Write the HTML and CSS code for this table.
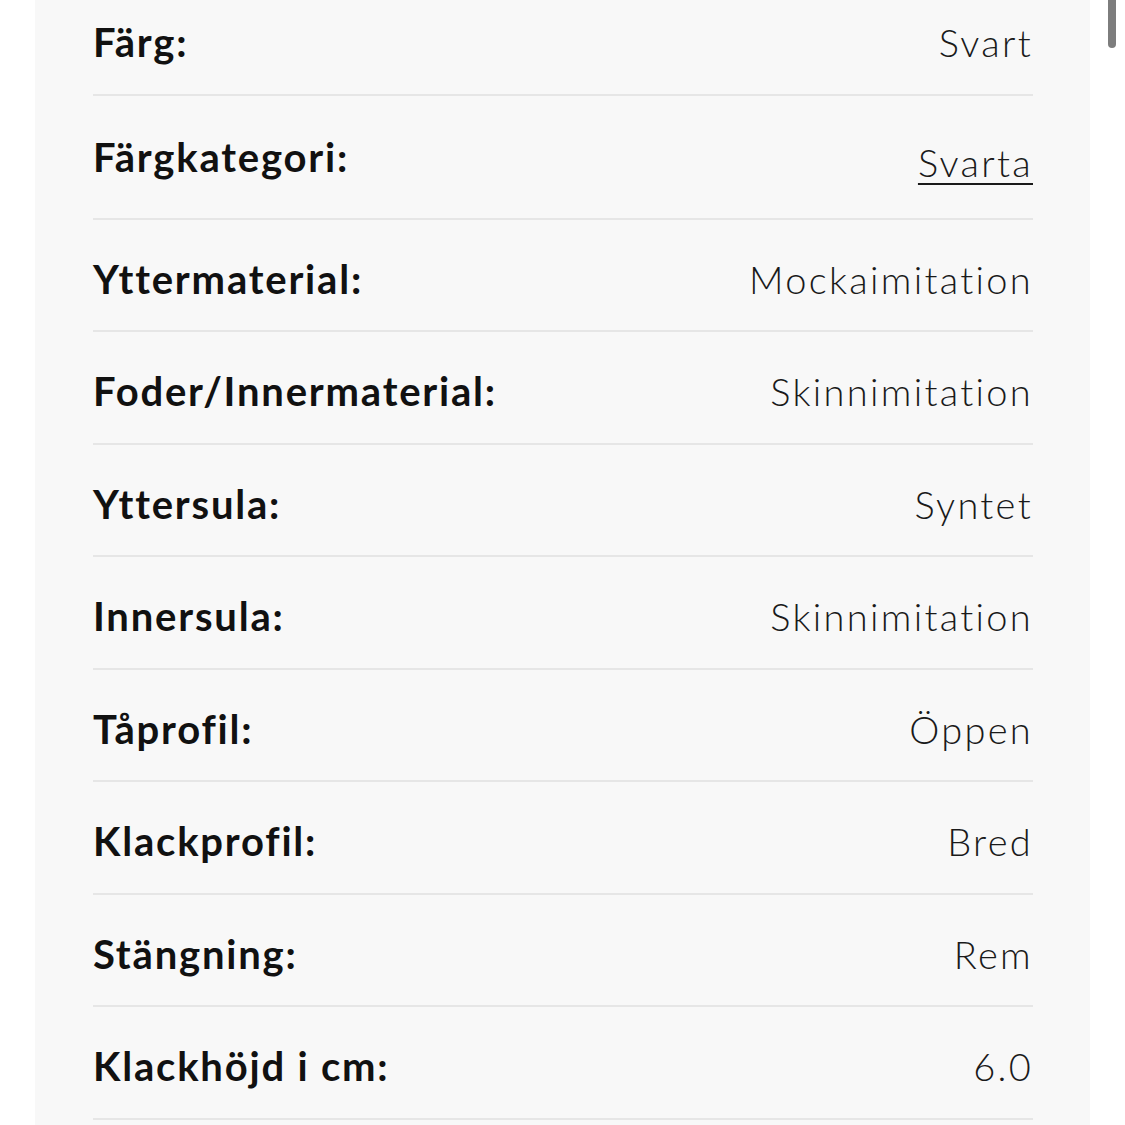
FILE: index.html
```html
<!DOCTYPE html>
<html lang="sv">
<head>
<meta charset="utf-8">
<title>Produktdetaljer</title>
<link rel="stylesheet" href="styles.css">
</head>
<body>
<div class="page">
  <section class="panel">
    <dl class="specs">
      <div class="row first"><dt>Färg:</dt><dd>Svart</dd></div>
      <div class="row linkrow"><dt>Färgkategori:</dt><dd><a href="#">Svarta</a></dd></div>
      <div class="row"><dt>Yttermaterial:</dt><dd>Mockaimitation</dd></div>
      <div class="row"><dt>Foder/Innermaterial:</dt><dd>Skinnimitation</dd></div>
      <div class="row"><dt>Yttersula:</dt><dd>Syntet</dd></div>
      <div class="row"><dt>Innersula:</dt><dd>Skinnimitation</dd></div>
      <div class="row"><dt>Tåprofil:</dt><dd>Öppen</dd></div>
      <div class="row"><dt>Klackprofil:</dt><dd>Bred</dd></div>
      <div class="row"><dt>Stängning:</dt><dd>Rem</dd></div>
      <div class="row"><dt>Klackhöjd i cm:</dt><dd>6.0</dd></div>
    </dl>
  </section>
  <div class="scrollbar"></div>
</div>
</body>
</html>
```
FILE: styles.css
```css
html, body {
  margin: 0;
  padding: 0;
  background: #ffffff;
  overflow: hidden;
}
body {
  font-family: "Lato", "Open Sans", sans-serif;
  color: #111;
}
.page {
  position: relative;
  width: 1125px;
  height: 1125px;
  overflow: hidden;
}
.panel {
  margin-left: 35px;
  width: 1055px;
  height: 1160px;
  margin-top: -17px;
  background: #f8f8f8;
  box-sizing: border-box;
  padding: 0 57px 0 58px;
}
.specs {
  margin: 0;
}
.row {
  display: flex;
  justify-content: space-between;
  align-items: center;
  box-sizing: border-box;
  height: 112.5px;
  padding-top: 8px;
  border-bottom: 2px solid #e6e6e6;
}
.row.linkrow {
  height: 124px;
  padding-top: 0;
}
dt {
  font-size: 40px;
  font-weight: 700;
  color: #111;
  letter-spacing: 1.8px;
}
dd {
  margin: 0;
  font-size: 38px;
  font-weight: 300;
  color: #1a1a1a;
  letter-spacing: 2.3px;
}
.linkrow dd {
  margin-top: 10px;
}
dd a {
  color: inherit;
  text-decoration: underline;
  text-decoration-thickness: 2px;
  text-underline-offset: 6px;
}
.scrollbar {
  position: absolute;
  top: -6px;
  left: 1108px;
  width: 8px;
  height: 54px;
  border-radius: 4px;
  background: #7d7d7d;
}
```
